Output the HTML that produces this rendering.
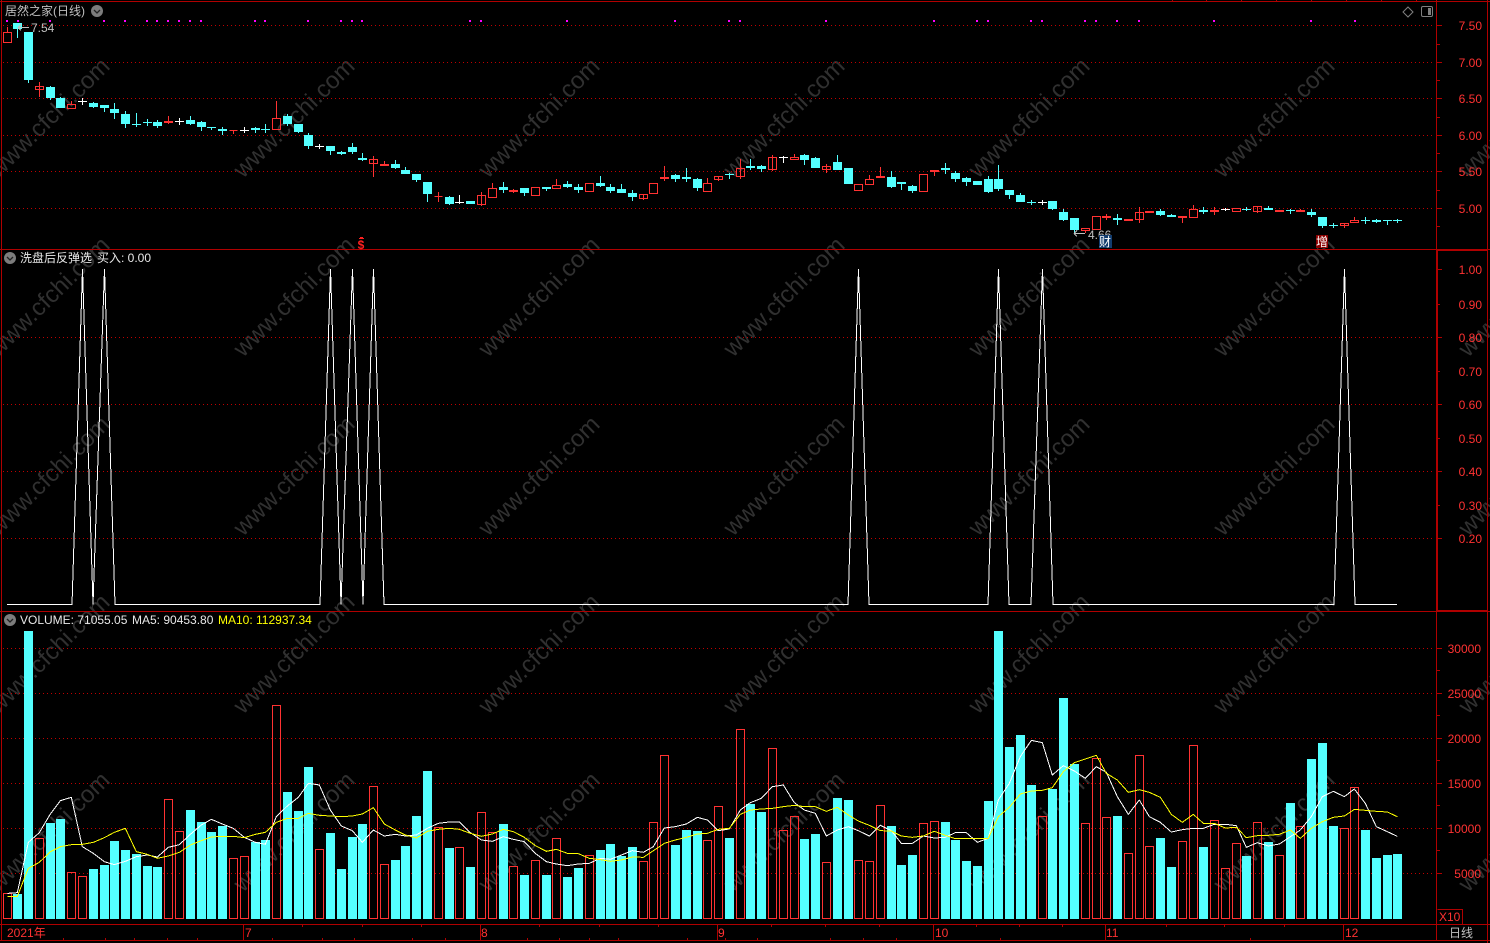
<!DOCTYPE html>
<html><head><meta charset="utf-8"><title>K</title>
<style>
html,body{margin:0;padding:0;background:#000;width:1490px;height:943px;overflow:hidden}
svg{display:block;position:absolute;left:0;top:0}
text{font-family:"Liberation Sans","WenQuanYi Zen Hei","Noto Sans CJK SC",sans-serif;font-size:12px}
.wm text{font-size:24px;fill:#303030}
.ax text{fill:#ff3232;text-anchor:end}
.tm text{fill:#ff3232}
</style></head><body>
<svg width="1490" height="943" viewBox="0 0 1490 943" xmlns="http://www.w3.org/2000/svg">
<rect width="1490" height="943" fill="#000"/>
<g class="wm">
<text transform="translate(-2,179) rotate(-44.5)">www.cfchi.com</text><text transform="translate(243,179) rotate(-44.5)">www.cfchi.com</text><text transform="translate(488,179) rotate(-44.5)">www.cfchi.com</text><text transform="translate(733,179) rotate(-44.5)">www.cfchi.com</text><text transform="translate(978,179) rotate(-44.5)">www.cfchi.com</text><text transform="translate(1223,179) rotate(-44.5)">www.cfchi.com</text><text transform="translate(1468,179) rotate(-44.5)">www.cfchi.com</text>
<text transform="translate(-2,358) rotate(-44.5)">www.cfchi.com</text><text transform="translate(243,358) rotate(-44.5)">www.cfchi.com</text><text transform="translate(488,358) rotate(-44.5)">www.cfchi.com</text><text transform="translate(733,358) rotate(-44.5)">www.cfchi.com</text><text transform="translate(978,358) rotate(-44.5)">www.cfchi.com</text><text transform="translate(1223,358) rotate(-44.5)">www.cfchi.com</text><text transform="translate(1468,358) rotate(-44.5)">www.cfchi.com</text>
<text transform="translate(-2,537) rotate(-44.5)">www.cfchi.com</text><text transform="translate(243,537) rotate(-44.5)">www.cfchi.com</text><text transform="translate(488,537) rotate(-44.5)">www.cfchi.com</text><text transform="translate(733,537) rotate(-44.5)">www.cfchi.com</text><text transform="translate(978,537) rotate(-44.5)">www.cfchi.com</text><text transform="translate(1223,537) rotate(-44.5)">www.cfchi.com</text><text transform="translate(1468,537) rotate(-44.5)">www.cfchi.com</text>
<text transform="translate(-2,715) rotate(-44.5)">www.cfchi.com</text><text transform="translate(243,715) rotate(-44.5)">www.cfchi.com</text><text transform="translate(488,715) rotate(-44.5)">www.cfchi.com</text><text transform="translate(733,715) rotate(-44.5)">www.cfchi.com</text><text transform="translate(978,715) rotate(-44.5)">www.cfchi.com</text><text transform="translate(1223,715) rotate(-44.5)">www.cfchi.com</text><text transform="translate(1468,715) rotate(-44.5)">www.cfchi.com</text>
<text transform="translate(-2,893) rotate(-44.5)">www.cfchi.com</text><text transform="translate(243,893) rotate(-44.5)">www.cfchi.com</text><text transform="translate(488,893) rotate(-44.5)">www.cfchi.com</text><text transform="translate(733,893) rotate(-44.5)">www.cfchi.com</text><text transform="translate(978,893) rotate(-44.5)">www.cfchi.com</text><text transform="translate(1223,893) rotate(-44.5)">www.cfchi.com</text><text transform="translate(1468,893) rotate(-44.5)">www.cfchi.com</text>
</g>
<!-- dotted grid -->
<path shape-rendering="crispEdges" stroke="#c00000" stroke-width="1" stroke-dasharray="1 3" fill="none" d="M3 25.5H1433M3 62.5H1433M3 98.5H1433M3 135.5H1433M3 171.5H1433M3 208.5H1433M3 337.5H1433M3 404.5H1433M3 471.5H1433M3 538.5H1433M3 648.5H1433M3 693.5H1433M3 738.5H1433M3 783.5H1433M3 828.5H1433M3 873.5H1433"/>
<!-- frame -->
<path shape-rendering="crispEdges" stroke="#b00000" stroke-width="1" fill="none" d="M1.5 0V941M0 1.5H1490M0 249.5H1490M0 611.5H1490M0 924.5H1490M0 940.5H1490M1436.5 0V941M1487.5 0V943M1437.5 909.5H1462.5V924M1437 250.5H1488M1437 610.5H1488M1437.5 250V611
M243.5 924V940M480.5 924V940M717.5 924V940M933.5 924V940M1105.5 924V940M1343.5 924V940
M302.5 924v3M362.5 924v3M421.5 924v3M539.5 924v3M599.5 924v3M658.5 924v3M771.5 924v3M825.5 924v3M879.5 924v3M976.5 924v3M1019.5 924v3M1062.5 924v3M1166.5 924v3M1224.5 924v3M1284.5 924v3
M63.5 938v3M105.5 938v3M134.5 938v3M167.5 938v3M197.5 938v3M272.5 938v3M322.5 938v3M354.5 938v3M412.5 938v3M445.5 938v3M527.5 938v3M559.5 938v3M589.5 938v3M618.5 938v3M687.5 938v3M725.5 938v3M757.5 938v3M830.5 938v3M863.5 938v3M896.5 938v3M1000.5 938v3M1250.5 938v3
M1172.5 0v1M1206.5 0v1M1241.5 0v1M1276.5 0v1M1311.5 0v1M1346.5 0v1M1381.5 0v1M1416.5 0v1
M1437 25.5h5M1437 62.5h5M1437 98.5h5M1437 135.5h5M1437 171.5h5M1437 208.5h5M1437 44.5h3M1437 80.5h3M1437 117.5h3M1437 153.5h3M1437 190.5h3M1437 226.5h3
M1437 269.5h5M1437 304.5h3M1437 337.5h5M1437 371.5h3M1437 404.5h5M1437 438.5h3M1437 471.5h5M1437 505.5h3M1437 538.5h5
M1437 648.5h5M1437 693.5h5M1437 738.5h5M1437 783.5h5M1437 828.5h5M1437 873.5h5M1437 670.5h3M1437 715.5h3M1437 760.5h3M1437 805.5h3M1437 850.5h3"/>
<!-- magenta marks -->
<path shape-rendering="crispEdges" stroke="#ff00ff" stroke-width="2" fill="none" d="M6 21h2M17 21h2M49 21h2M103 21h2M124 21h2M146 21h2M156 21h2M167 21h2M178 21h2M189 21h2M200 21h2M254 21h2M264 21h2M307 21h2M340 21h2M351 21h2M361 21h2M469 21h2M480 21h2M566 21h2M674 21h2M728 21h2M739 21h2M825 21h2M933 21h2M976 21h2M987 21h2M1030 21h2M1041 21h2M1084 21h2M1095 21h2M1116 21h2M1138 21h2M1213 21h2M1310 21h2M1354 21h2"/>
<!-- candles cyan -->
<path shape-rendering="crispEdges" fill="#54ffff" d="
M13 23h9V29h-9zM17 23h1V38h-1z
M24 32h9V80h-9zM28 32h1V83h-1z
M46 87h9V98h-9zM50 86h1V100h-1z
M56 98h9V108h-9zM60 97h1V108h-1z
M89 103h9V107h-9zM93 102h1V108h-1z
M100 105h9V108h-9zM104 105h1V112h-1z
M110 109h9V113h-9zM114 103h1V119h-1z
M121 114h9V124h-9zM125 111h1V128h-1z
M132 124h9V125h-9zM136 113h1V127h-1z
M143 122h9V123h-9zM147 119h1V126h-1z
M153 122h9V126h-9zM157 120h1V128h-1z
M186 120h9V124h-9zM190 116h1V125h-1z
M197 122h9V127h-9zM201 121h1V131h-1z
M207 127h9V128h-9zM211 127h1V130h-1z
M218 129h9V131h-9zM222 127h1V135h-1z
M251 128h9V130h-9zM255 127h1V133h-1z
M261 129h9V130h-9zM265 124h1V133h-1z
M283 116h9V124h-9zM287 114h1V126h-1z
M294 124h9V132h-9zM298 124h1V133h-1z
M304 135h9V146h-9zM308 133h1V149h-1z
M326 146h9V151h-9zM330 146h1V155h-1z
M337 152h9V154h-9zM341 151h1V155h-1z
M348 147h9V152h-9zM352 143h1V154h-1z
M358 158h9V160h-9zM362 153h1V161h-1z
M391 164h9V168h-9zM395 160h1V169h-1z
M401 170h9V174h-9zM405 167h1V174h-1z
M412 174h9V180h-9zM416 174h1V182h-1z
M423 182h9V194h-9zM427 182h1V202h-1z
M445 197h9V204h-9zM449 196h1V205h-1z
M466 201h9V204h-9z
M499 187h9V190h-9zM503 182h1V193h-1z
M520 188h9V193h-9zM524 188h1V196h-1z
M542 187h9V189h-9zM546 187h1V191h-1z
M563 184h9V187h-9zM567 181h1V188h-1z
M574 187h9V190h-9zM578 184h1V193h-1z
M596 183h9V186h-9zM600 176h1V187h-1z
M606 187h9V191h-9zM610 184h1V193h-1z
M617 189h9V193h-9zM621 184h1V193h-1z
M628 193h9V197h-9zM632 190h1V201h-1z
M671 175h9V179h-9zM675 174h1V182h-1z
M682 177h9V179h-9zM686 168h1V182h-1z
M693 179h9V188h-9zM697 178h1V191h-1z
M725 174h9V175h-9zM729 173h1V179h-1z
M746 166h9V168h-9zM750 159h1V170h-1z
M757 166h9V169h-9zM761 165h1V172h-1z
M800 155h9V160h-9zM804 154h1V165h-1z
M811 158h9V168h-9zM815 157h1V168h-1z
M833 162h9V170h-9zM837 155h1V170h-1z
M844 168h9V184h-9z
M887 177h9V187h-9zM891 171h1V188h-1z
M897 182h9V184h-9zM901 182h1V190h-1z
M908 186h9V191h-9zM912 185h1V193h-1z
M941 168h9V170h-9zM945 163h1V174h-1z
M951 173h9V179h-9zM955 171h1V182h-1z
M962 178h9V182h-9zM966 177h1V186h-1z
M973 181h9V185h-9z
M984 179h9V192h-9zM988 176h1V193h-1z
M994 179h9V189h-9zM998 165h1V191h-1z
M1005 190h9V195h-9zM1009 190h1V199h-1z
M1016 195h9V202h-9zM1020 193h1V202h-1z
M1027 202h9V203h-9zM1031 200h1V205h-1z
M1048 201h9V209h-9zM1052 201h1V210h-1z
M1059 212h9V220h-9zM1063 209h1V221h-1z
M1070 218h9V230h-9zM1074 218h1V234h-1z
M1113 218h9V220h-9zM1117 214h1V225h-1z
M1156 211h9V215h-9zM1160 209h1V216h-1z
M1167 215h9V217h-9zM1171 214h1V217h-1z
M1199 210h9V212h-9zM1203 207h1V214h-1z
M1242 209h9V210h-9zM1246 207h1V211h-1z
M1264 208h9V210h-9zM1268 206h1V210h-1z
M1286 210h9V211h-9zM1290 209h1V214h-1z
M1307 212h9V215h-9zM1311 209h1V217h-1z
M1318 217h9V226h-9zM1322 217h1V228h-1z
M1329 225h9V226h-9zM1333 223h1V228h-1z
M1361 220h9V221h-9zM1365 217h1V224h-1z
M1372 220h9V222h-9zM1376 219h1V223h-1z
M1383 220h9V221h-9zM1387 220h1V225h-1z
M1393 220h9V221h-9zM1397 219h1V223h-1z"/>
<!-- candles red -->
<path shape-rendering="crispEdges" fill="none" stroke="#ff3232" stroke-width="1" d="
M3.5 32.5h8V42.5h-8zM7.5 27V32
M35.5 86.5h8V89.5h-8zM39.5 82V97
M67.5 104.5h8V108.5h-8zM71.5 101V104
M164.5 121.5h8V122.5h-8zM168.5 116V124
M229.5 130.5h8M233.5 130V134
M272.5 118.5h8V129.5h-8zM276.5 101V118
M369.5 159.5h8V163.5h-8zM373.5 156V177
M380.5 164.5h8V165.5h-8zM384.5 161V166
M434.5 196.5h8V196.5h-8zM438.5 192V202
M477.5 195.5h8V204.5h-8zM481.5 192V206
M488.5 188.5h8V197.5h-8zM492.5 183V188
M509.5 190.5h8V191.5h-8zM513.5 189V193
M531.5 187.5h8V195.5h-8z
M552.5 185.5h8V188.5h-8zM556.5 179V185
M585.5 183.5h8V191.5h-8z
M639.5 194.5h8V198.5h-8zM643.5 194V200
M649.5 183.5h8V193.5h-8z
M660.5 177.5h8V178.5h-8zM664.5 166V181
M703.5 183.5h8V191.5h-8zM707.5 178V183
M714.5 176.5h8V179.5h-8zM718.5 176V181
M736.5 168.5h8V176.5h-8zM740.5 159V179
M768.5 157.5h8V169.5h-8zM772.5 155V171
M790.5 157.5h8V159.5h-8zM794.5 154V157
M822.5 166.5h8V169.5h-8zM826.5 164V173
M854.5 184.5h8V190.5h-8z
M865.5 179.5h8V184.5h-8zM869.5 175V179
M876.5 176.5h8V177.5h-8zM880.5 167V176
M919.5 174.5h8V191.5h-8z
M930.5 170.5h8V171.5h-8zM934.5 170V176
M1081.5 228.5h8V230.5h-8zM1085.5 231V233
M1092.5 216.5h8V229.5h-8z
M1102.5 216.5h8V217.5h-8zM1106.5 214V220
M1124.5 219.5h8V220.5h-8z
M1135.5 212.5h8V219.5h-8zM1139.5 207V223
M1145.5 211.5h8V212.5h-8z
M1178.5 216.5h8V217.5h-8zM1182.5 216V223
M1189.5 209.5h8V217.5h-8zM1193.5 205V209
M1210.5 210.5h8V211.5h-8zM1214.5 207V215
M1232.5 208.5h8V211.5h-8z
M1253.5 206.5h8V211.5h-8zM1257.5 206V213
M1275.5 210.5h8V211.5h-8z
M1296.5 210.5h8V211.5h-8zM1300.5 209V210
M1340.5 223.5h8V225.5h-8zM1344.5 223V228
M1350.5 220.5h8V222.5h-8zM1354.5 217V220"/>
<!-- white doji -->
<path shape-rendering="crispEdges" fill="none" stroke="#fff" stroke-width="1" d="M78 101.5h9M82.5 98V105M175 121.5h9M179.5 118V125M240 130.5h9M244.5 127V133M315 146.5h9M319.5 144V149M455 202.5h9M459.5 195V204M779 157.5h9M783.5 156V163M1038 202.5h9M1042.5 200V205M1221 209.5h9M1225.5 208V211"/>
<!-- annotations -->
<path shape-rendering="crispEdges" fill="none" stroke="#c0c0c0" d="M18 27.5h11M18 27.5l3-3M18 27.5l3 3M1074 233.5h11M1074 233.5l3-3M1074 233.5l3 3"/>
<text x="31" y="32" fill="#c0c0c0">7.54</text>
<text x="1088" y="239" fill="#c0c0c0">4.66</text>
<rect x="1099" y="235" width="13" height="13" fill="#123c6e"/>
<text x="1099" y="246" fill="#fff">财</text>
<rect x="1316" y="235" width="12" height="13" fill="#8a0000"/>
<text x="1316" y="246" fill="#fff">增</text>
<text x="361" y="249" fill="#ff2020" text-anchor="middle" style="font-weight:bold">$</text>
<path shape-rendering="crispEdges" fill="none" stroke="#ff2020" d="M359 238.5h5M360 237.5h3"/>
<!-- mid panel -->
<polyline shape-rendering="crispEdges" fill="none" stroke="#fff" stroke-width="1" points="7,604.5 72,604.5 82.5,269 93,604.5 104.5,269 115,604.5 320,604.5 330.5,269 341,604.5 352.5,269 363,604.5 373.5,269 384,604.5 848,604.5 858.5,269 869,604.5 988,604.5 998.5,269 1009,604.5 1031,604.5 1042.5,269 1053,604.5 1334,604.5 1344.5,269 1355,604.5 1397,604.5"/>
<!-- volume cyan -->
<path shape-rendering="crispEdges" fill="#54ffff" d="M13 894h9V919h-9zM24 631h9V919h-9zM46 823h9V919h-9zM56 819h9V919h-9zM89 869h9V919h-9zM100 865h9V919h-9zM110 841h9V919h-9zM121 850h9V919h-9zM132 854h9V919h-9zM143 866h9V919h-9zM153 867h9V919h-9zM186 810h9V919h-9zM197 822h9V919h-9zM207 832h9V919h-9zM218 826h9V919h-9zM251 842h9V919h-9zM261 840h9V919h-9zM283 792h9V919h-9zM294 811h9V919h-9zM304 767h9V919h-9zM326 833h9V919h-9zM337 869h9V919h-9zM348 837h9V919h-9zM358 824h9V919h-9zM391 860h9V919h-9zM401 846h9V919h-9zM412 816h9V919h-9zM423 771h9V919h-9zM445 848h9V919h-9zM466 867h9V919h-9zM499 824h9V919h-9zM520 875h9V919h-9zM542 875h9V919h-9zM563 877h9V919h-9zM574 868h9V919h-9zM596 850h9V919h-9zM606 844h9V919h-9zM617 856h9V919h-9zM628 847h9V919h-9zM671 845h9V919h-9zM682 830h9V919h-9zM693 831h9V919h-9zM725 838h9V919h-9zM746 804h9V919h-9zM757 812h9V919h-9zM800 839h9V919h-9zM811 834h9V919h-9zM833 798h9V919h-9zM844 800h9V919h-9zM887 826h9V919h-9zM897 865h9V919h-9zM908 855h9V919h-9zM941 822h9V919h-9zM951 840h9V919h-9zM962 861h9V919h-9zM973 866h9V919h-9zM984 801h9V919h-9zM994 631h9V919h-9zM1005 747h9V919h-9zM1016 735h9V919h-9zM1027 785h9V919h-9zM1048 789h9V919h-9zM1059 698h9V919h-9zM1070 764h9V919h-9zM1113 816h9V919h-9zM1156 838h9V919h-9zM1167 867h9V919h-9zM1199 847h9V919h-9zM1242 856h9V919h-9zM1264 842h9V919h-9zM1286 803h9V919h-9zM1307 759h9V919h-9zM1318 743h9V919h-9zM1329 826h9V919h-9zM1361 830h9V919h-9zM1372 858h9V919h-9zM1383 855h9V919h-9zM1393 854h9V919h-9z"/>
<!-- volume red -->
<path shape-rendering="crispEdges" fill="none" stroke="#ff3232" stroke-width="1" d="M3.5 893.5h8V918.5h-8zM35.5 838.5h8V918.5h-8zM67.5 872.5h8V918.5h-8zM78.5 876.5h8V918.5h-8zM164.5 799.5h8V918.5h-8zM175.5 831.5h8V918.5h-8zM229.5 858.5h8V918.5h-8zM240.5 856.5h8V918.5h-8zM272.5 705.5h8V918.5h-8zM315.5 849.5h8V918.5h-8zM369.5 786.5h8V918.5h-8zM380.5 864.5h8V918.5h-8zM434.5 827.5h8V918.5h-8zM455.5 847.5h8V918.5h-8zM477.5 812.5h8V918.5h-8zM488.5 832.5h8V918.5h-8zM509.5 866.5h8V918.5h-8zM531.5 860.5h8V918.5h-8zM552.5 838.5h8V918.5h-8zM585.5 855.5h8V918.5h-8zM639.5 861.5h8V918.5h-8zM649.5 822.5h8V918.5h-8zM660.5 755.5h8V918.5h-8zM703.5 840.5h8V918.5h-8zM714.5 806.5h8V918.5h-8zM736.5 729.5h8V918.5h-8zM768.5 748.5h8V918.5h-8zM779.5 830.5h8V918.5h-8zM790.5 816.5h8V918.5h-8zM822.5 862.5h8V918.5h-8zM854.5 860.5h8V918.5h-8zM865.5 861.5h8V918.5h-8zM876.5 805.5h8V918.5h-8zM919.5 823.5h8V918.5h-8zM930.5 821.5h8V918.5h-8zM1038.5 816.5h8V918.5h-8zM1081.5 823.5h8V918.5h-8zM1092.5 758.5h8V918.5h-8zM1102.5 817.5h8V918.5h-8zM1124.5 853.5h8V918.5h-8zM1135.5 755.5h8V918.5h-8zM1145.5 846.5h8V918.5h-8zM1178.5 841.5h8V918.5h-8zM1189.5 745.5h8V918.5h-8zM1210.5 820.5h8V918.5h-8zM1221.5 868.5h8V918.5h-8zM1232.5 843.5h8V918.5h-8zM1253.5 822.5h8V918.5h-8zM1275.5 855.5h8V918.5h-8zM1296.5 826.5h8V918.5h-8zM1340.5 828.5h8V918.5h-8zM1350.5 787.5h8V918.5h-8z"/>
<!-- MA lines -->
<g transform="translate(0,610) scale(.33333)" fill="none" stroke-width="3" shape-rendering="crispEdges">
<polyline stroke="#fff" points="23,850 52,848 85,697 118,668 151,612 181,572 214,562 247,710 280,730 313,755 343,764 376,754 409,740 442,735 472,741 505,712 538,704 571,673 604,645 634,628 667,642 700,655 733,682 766,697 796,703 829,620 862,588 895,562 925,520 958,525 991,600 1024,648 1057,662 1087,697 1120,660 1153,678 1186,673 1216,678 1249,675 1282,655 1315,640 1348,636 1378,636 1411,668 1444,690 1477,694 1510,680 1540,688 1573,695 1606,730 1639,755 1669,762 1702,767 1735,762 1768,760 1801,745 1831,748 1864,735 1897,722 1930,727 1960,710 1993,654 2026,650 2059,642 2092,622 2122,630 2155,662 2188,657 2221,600 2251,578 2284,565 2317,530 2350,525 2383,578 2413,600 2446,610 2479,678 2512,660 2545,650 2575,662 2608,678 2641,646 2674,662 2704,700 2737,700 2770,678 2803,684 2836,682 2866,668 2899,668 2932,697 2965,685 2995,570 3028,520 3061,440 3094,391 3127,398 3157,495 3190,467 3223,483 3256,505 3289,470 3319,487 3352,560 3385,613 3418,570 3448,620 3481,637 3514,666 3547,659 3580,655 3610,655 3643,643 3676,643 3709,647 3739,712 3772,698 3805,708 3838,702 3871,680 3901,660 3934,620 3967,560 4000,544 4033,560 4063,537 4096,580 4129,650 4162,665 4192,679"/>
<polyline stroke="#ffff00" points="23,859 52,859 85,775 118,757 151,725 181,710 214,704 247,703 280,697 313,683 343,667 376,655 409,725 442,733 472,745 505,738 538,727 571,705 604,692 634,681 667,679 700,679 733,683 766,673 796,667 829,637 862,625 895,625 925,610 958,616 991,618 1024,620 1057,618 1087,612 1120,593 1153,642 1186,660 1216,675 1249,684 1282,664 1315,658 1348,655 1378,658 1411,670 1444,679 1477,672 1510,658 1540,665 1573,682 1606,707 1639,724 1669,718 1702,730 1735,731 1768,745 1801,749 1831,754 1864,750 1897,741 1930,742 1960,722 1993,700 2026,690 2059,682 2092,672 2122,670 2155,658 2188,655 2221,613 2251,600 2284,597 2317,595 2350,590 2383,586 2413,590 2446,590 2479,604 2512,592 2545,615 2575,633 2608,646 2641,662 2674,663 2704,678 2737,682 2770,678 2803,664 2836,676 2866,686 2899,686 2932,686 2965,685 2995,620 3028,592 3061,552 3094,543 3127,541 3157,533 3190,485 3223,458 3256,447 3289,436 3319,490 3352,510 3385,547 3418,539 3448,547 3481,562 3514,613 3547,637 3580,613 3610,640 3643,640 3676,654 3709,652 3739,683 3772,677 3805,676 3838,673 3871,660 3901,685 3934,655 3967,635 4000,622 4033,618 4063,598 4096,601 4129,604 4162,606 4192,620"/>
</g>
<!-- legends -->
<text x="5" y="15" fill="#c0c0c0">居然之家(日线)</text>
<circle cx="97" cy="11" r="6" fill="#7c7c7c"/><path d="M94 10l3 3 3-3" fill="none" stroke="#222" stroke-width="1.3"/>
<circle cx="10" cy="258" r="6" fill="#7c7c7c"/><path d="M7 257l3 3 3-3" fill="none" stroke="#222" stroke-width="1.3"/>
<circle cx="10" cy="620" r="6" fill="#7c7c7c"/><path d="M7 619l3 3 3-3" fill="none" stroke="#222" stroke-width="1.3"/>
<text x="20" y="262" fill="#e8e8e8">洗盘后反弹选</text>
<text x="97" y="262" fill="#e8e8e8">买入: 0.00</text>
<text x="20" y="624" fill="#e8e8e8">VOLUME: 71055.05</text>
<text x="132" y="624" fill="#e8e8e8">MA5: 90453.80</text>
<text x="218" y="624" fill="#ffff00">MA10: 112937.34</text>
<!-- top right icons -->
<path d="M1408 7l5 5-5 5-5-5z" fill="none" stroke="#808080"/>
<rect x="1421.5" y="6.5" width="11" height="10" rx="1.5" fill="none" stroke="#808080"/>
<rect x="1428" y="8" width="3" height="7" fill="#808080"/>
<!-- axis labels -->
<g class="ax">
<text x="1482" y="30">7.50</text><text x="1482" y="67">7.00</text><text x="1482" y="103">6.50</text><text x="1482" y="140">6.00</text><text x="1482" y="176">5.50</text><text x="1482" y="213">5.00</text>
<text x="1482" y="274">1.00</text><text x="1482" y="309">0.90</text><text x="1482" y="342">0.80</text><text x="1482" y="376">0.70</text><text x="1482" y="409">0.60</text><text x="1482" y="443">0.50</text><text x="1482" y="476">0.40</text><text x="1482" y="510">0.30</text><text x="1482" y="543">0.20</text>
<text x="1481" y="653">30000</text><text x="1481" y="698">25000</text><text x="1481" y="743">20000</text><text x="1481" y="788">15000</text><text x="1481" y="833">10000</text><text x="1481" y="878">5000</text>
</g>
<text x="1439" y="921" fill="#ff3232">X10</text>
<text x="1449" y="937" fill="#c0c0c0">日线</text>
<g class="tm">
<text x="7" y="937">2021年</text><text x="245" y="937">7</text><text x="481" y="937">8</text><text x="718" y="937">9</text><text x="935" y="937">10</text><text x="1106" y="937">11</text><text x="1345" y="937">12</text>
</g>
</svg>
</body></html>
